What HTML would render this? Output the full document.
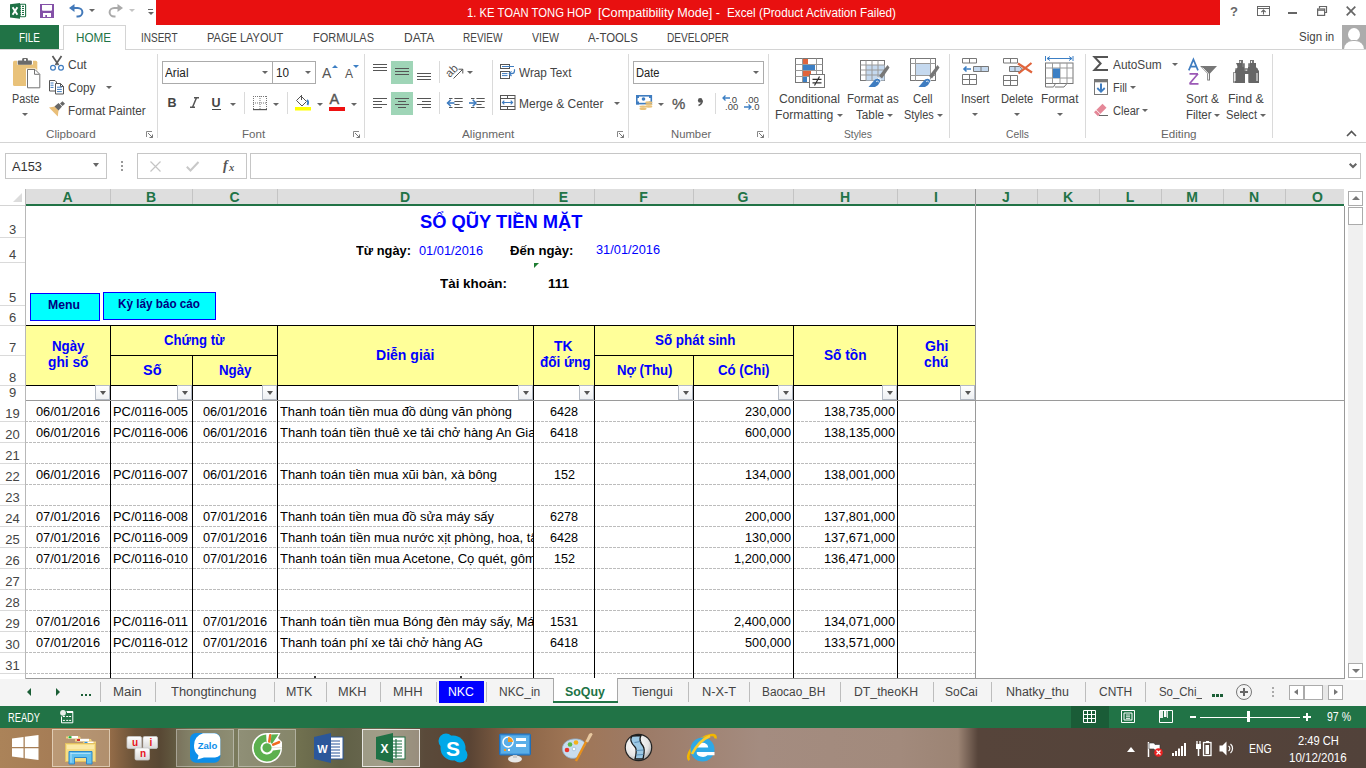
<!DOCTYPE html>
<html><head><meta charset="utf-8">
<style>
*{margin:0;padding:0;box-sizing:border-box}
html,body{width:1366px;height:768px;overflow:hidden;background:#fff;font-family:"Liberation Sans",sans-serif}
.a{position:absolute}
.t{position:absolute;white-space:nowrap;line-height:1;transform-origin:0 0}
.r{font-size:12px;color:#444}
.g{font-size:11.5px;color:#666}
svg{position:absolute;overflow:visible}
.sep{position:absolute;width:1px;background:#dadada}
.dd{position:absolute;width:0;height:0;border-left:3px solid transparent;border-right:3px solid transparent;border-top:3px solid #666}
.ddl{position:absolute;width:0;height:0;border-left:4px solid transparent;border-right:4px solid transparent;border-top:4px solid #555}
</style><style>
.fb{background:linear-gradient(#fff,#eef0f3);border:1px solid #b4bac4}
.fb:after{content:"";position:absolute;left:3.5px;top:5px;border-left:3px solid transparent;border-right:3px solid transparent;border-top:4px solid #555}
.dash{background:repeating-linear-gradient(90deg,#bcbcbc 0 3px,transparent 3px 4px)}
</style></head><body>
<!-- TITLE BAR -->
<div class="a" style="left:156px;top:0;width:1064px;height:25px;background:#e81010"></div>
<div class="t fit" style="left: 467.2px; top: 7px; font-size: 12px; color: rgb(255, 255, 255); width: 124.5px; transform: scaleX(0.939623);">1. KE TOAN TONG HOP</div>
<div class="t fit" style="left: 597.8px; top: 7px; font-size: 12px; color: rgb(255, 255, 255); width: 122px; transform: scaleX(1.0513);">[Compatibility Mode] -</div>
<div class="t fit" style="left: 726.6px; top: 7px; font-size: 12px; color: rgb(255, 255, 255); width: 169px; transform: scaleX(0.978292);">Excel (Product Activation Failed)</div>
<!-- excel logo -->
<svg style="left:10px;top:3px" width="16" height="16" viewBox="0 0 16 16">
<path d="M0 1.2 L10 0 L10 15.8 L0 14.5Z" fill="#1e7145"></path>
<rect x="10" y="1.3" width="5.6" height="12.4" rx="0.6" fill="#fff" stroke="#1e7145" stroke-width="1.1"></rect>
<path d="M12 3.4h2M12 5.5h2M12 7.5h2M12 9.5h2M12 11.5h2" stroke="#1e7145" stroke-width="1.1"></path>
<path d="M10 3.4h1M10 5.5h1M10 7.5h1M10 9.5h1M10 11.5h1" stroke="#1e7145" stroke-width="0.8"></path>
<path d="M2.6 4.2 L7.4 11.7 M7.4 4.2 L2.6 11.7" stroke="#fff" stroke-width="1.9"></path>
</svg>
<!-- save -->
<svg style="left:40px;top:4px" width="14" height="14" viewBox="0 0 14 14">
<rect x="0" y="0" width="14" height="14" fill="#8451a8"></rect>
<path d="M2 1h10v4.8a1 1 0 0 1-1 1h-8a1 1 0 0 1-1-1z" fill="#fff"></path>
<rect x="3" y="9" width="8" height="4" fill="#fff"></rect>
<rect x="5.3" y="11" width="1.7" height="2" fill="#8451a8"></rect>
</svg>
<!-- undo -->
<svg style="left:69px;top:4px" width="15" height="13" viewBox="0 0 15 13">
<path d="M0 4 L5.5 0 L5.5 8Z" fill="#4379b9"></path>
<path d="M4 4 H8.8 A4.6 4.3 0 0 1 8.8 12.6 H7.5" fill="none" stroke="#4379b9" stroke-width="2"></path>
</svg>
<div class="dd" style="left:89px;top:9px;border-left-width:3.5px;border-right-width:3.5px;border-top:3.5px solid #666"></div>
<svg style="left:108px;top:4px" width="15" height="13" viewBox="0 0 15 13">
<path d="M15 4 L9.5 0 L9.5 8Z" fill="#aaa"></path>
<path d="M11 4 H6.2 A4.6 4.3 0 0 0 6.2 12.6 H7.5" fill="none" stroke="#aaa" stroke-width="2"></path>
</svg>
<div class="dd" style="left:129px;top:9px;border-left-width:3.5px;border-right-width:3.5px;border-top:3.5px solid #c4c4c4"></div>
<div class="a" style="left:148px;top:9px;width:5px;height:1.2px;background:#666"></div>
<div class="dd" style="left:147.5px;top:11.5px;border-left-width:3px;border-right-width:3px;border-top:3px solid #666"></div>
<!-- window controls -->
<div class="t" style="left:1230px;top:5px;font-size:13px;font-weight:bold;color:#666">?</div>
<svg style="left:1257px;top:6px" width="13" height="10" viewBox="0 0 13 10">
<rect x="0.5" y="0.5" width="12" height="9" fill="none" stroke="#666" stroke-width="1"></rect>
<path d="M0.5 2.5h12" stroke="#666"></path>
<path d="M6.5 8.5v-4.5 M4.3 6.2 L6.5 4 L8.7 6.2" fill="none" stroke="#666" stroke-width="1.1"></path>
</svg>
<div class="a" style="left:1288px;top:12px;width:9px;height:2px;background:#666"></div>
<svg style="left:1317px;top:6px" width="10" height="10" viewBox="0 0 10 10">
<path d="M2.5 2.5V0.5h7v6h-2" fill="none" stroke="#666" stroke-width="1.2"></path>
<rect x="0.6" y="3" width="7" height="6.4" fill="none" stroke="#666" stroke-width="1.2"></rect>
<path d="M0.6 4.2h7" stroke="#666" stroke-width="1.2"></path>
</svg>
<svg style="left:1346px;top:6px" width="10" height="10" viewBox="0 0 10 10">
<path d="M0.7 0.7L9.3 9.3M9.3 0.7L0.7 9.3" stroke="#666" stroke-width="1.7"></path>
</svg>

<!-- TAB ROW -->
<div class="a" style="left:0;top:25px;width:59px;height:25px;background:#217346"></div>
<div class="t fit" style="left: 19px; top: 31.5px; font-size: 12.5px; color: rgb(255, 255, 255); width: 21px; transform: scaleX(0.795266);">FILE</div>
<div class="a" style="left:63px;top:25px;width:63px;height:25px;background:#fff;border:1px solid #d4d4d4;border-bottom:none;z-index:2"></div>
<div class="t fit" style="left: 76px; top: 31.5px; font-size: 12.5px; color: rgb(33, 115, 70); width: 35px; z-index: 3; transform: scaleX(0.933333);">HOME</div>
<div class="t fit r" style="left: 140.5px; top: 31.5px; font-size: 12.5px; width: 36.5px; transform: scaleX(0.8);">INSERT</div>
<div class="t fit r" style="left: 207px; top: 31.5px; font-size: 12.5px; width: 76.2px; transform: scaleX(0.8822);">PAGE LAYOUT</div>
<div class="t fit r" style="left: 313px; top: 31.5px; font-size: 12.5px; width: 61px; transform: scaleX(0.87829);">FORMULAS</div>
<div class="t fit r" style="left: 403.5px; top: 31.5px; font-size: 12.5px; width: 30.2px; transform: scaleX(0.959206);">DATA</div>
<div class="t fit r" style="left: 463px; top: 31.5px; font-size: 12.5px; width: 39.5px; transform: scaleX(0.801014);">REVIEW</div>
<div class="t fit r" style="left: 531.8px; top: 31.5px; font-size: 12.5px; width: 27px; transform: scaleX(0.844988);">VIEW</div>
<div class="t fit r" style="left: 588px; top: 31.5px; font-size: 12.5px; width: 49.8px; transform: scaleX(0.911149);">A-TOOLS</div>
<div class="t fit r" style="left: 667px; top: 31.5px; font-size: 12.5px; width: 61.8px; transform: scaleX(0.808669);">DEVELOPER</div>
<div class="t fit r" style="left: 1299px; top: 31px; font-size: 12.5px; width: 35.2px; transform: scaleX(0.920638);">Sign in</div>
<div class="a" style="left:1342px;top:25px;width:24px;height:24px;background:#acacac;overflow:hidden">
<div class="a" style="left:6px;top:3px;width:12px;height:13px;border-radius:50%;background:#fff"></div>
<div class="a" style="left:2px;top:15px;width:20px;height:14px;border-radius:9px 9px 0 0;background:#fff;border-top:1px solid #acacac"></div>
</div>
<!-- ribbon borders -->
<div class="a" style="left:0;top:49px;width:1366px;height:1px;background:#d4d4d4;z-index:1"></div>
<div class="a" style="left:0;top:142px;width:1366px;height:1px;background:#d4d4d4"></div>

<!-- ===== RIBBON CONTENT ===== -->
<!-- separators -->
<div class="sep" style="left:157px;top:54px;height:84px"></div>
<div class="sep" style="left:364px;top:54px;height:84px"></div>
<div class="sep" style="left:628px;top:54px;height:84px"></div>
<div class="sep" style="left:768px;top:54px;height:84px"></div>
<div class="sep" style="left:949px;top:54px;height:84px"></div>
<div class="sep" style="left:1085px;top:54px;height:84px"></div>
<div class="sep" style="left:1272px;top:54px;height:84px"></div>
<!-- group labels -->
<div class="t fit g" style="left: 45.8px; top: 129px; width: 49.7px; transform: scaleX(1.00946);">Clipboard</div>
<div class="t fit g" style="left: 241.6px; top: 129px; width: 23.1px; transform: scaleX(1.00367);">Font</div>
<div class="t fit g" style="left: 462.2px; top: 129px; width: 52.4px; transform: scaleX(1.02463);">Alignment</div>
<div class="t fit g" style="left: 670.8px; top: 129px; width: 40.2px; transform: scaleX(0.982735);">Number</div>
<div class="t fit g" style="left: 844.4px; top: 129px; width: 27.9px; transform: scaleX(0.890574);">Styles</div>
<div class="t fit g" style="left: 1005.6px; top: 129px; width: 22.9px; transform: scaleX(0.895844);">Cells</div>
<div class="t fit g" style="left: 1160.6px; top: 129px; width: 35.6px; transform: scaleX(1.01217);">Editing</div>
<!-- dialog launchers -->
<svg style="left:146px;top:131px" width="7" height="7" viewBox="0 0 7 7"><path d="M0.5 6V0.5H6" fill="none" stroke="#888"></path><path d="M2 2L6.5 6.5M6.5 3.5V6.5H3.5" fill="none" stroke="#777"></path></svg>
<svg style="left:353px;top:131px" width="7" height="7" viewBox="0 0 7 7"><path d="M0.5 6V0.5H6" fill="none" stroke="#888"></path><path d="M2 2L6.5 6.5M6.5 3.5V6.5H3.5" fill="none" stroke="#777"></path></svg>
<svg style="left:617px;top:131px" width="7" height="7" viewBox="0 0 7 7"><path d="M0.5 6V0.5H6" fill="none" stroke="#888"></path><path d="M2 2L6.5 6.5M6.5 3.5V6.5H3.5" fill="none" stroke="#777"></path></svg>
<svg style="left:757px;top:131px" width="7" height="7" viewBox="0 0 7 7"><path d="M0.5 6V0.5H6" fill="none" stroke="#888"></path><path d="M2 2L6.5 6.5M6.5 3.5V6.5H3.5" fill="none" stroke="#777"></path></svg>
<!-- collapse caret -->
<svg style="left:1346px;top:130px" width="11" height="7" viewBox="0 0 11 7"><path d="M1 6L5.5 1.5L10 6" fill="none" stroke="#555" stroke-width="1.6"></path></svg>

<!-- Clipboard -->
<svg style="left:12px;top:57px" width="30" height="32" viewBox="0 0 30 32">
<rect x="1" y="3.8" width="24.3" height="25.2" rx="1.5" fill="#e9c27a"></rect>
<rect x="5" y="3" width="16" height="4.5" fill="#fff"></rect>
<rect x="5.7" y="3.4" width="14.2" height="4.4" rx="1" fill="#6b6b6b"></rect>
<rect x="10.2" y="1" width="5.7" height="3.4" rx="1.2" fill="#6b6b6b"></rect>
<rect x="12.2" y="2" width="1.8" height="1.8" fill="#fff"></rect>
<path d="M14 11.5h9.5l5 5v15h-14.5z" fill="#fff"></path>
<path d="M15.5 12.5h7.5l4.8 4.8v13.5h-12.3z" fill="#fff" stroke="#737373" stroke-width="1"></path>
<path d="M22.5 12.5v4.8h5" fill="none" stroke="#737373" stroke-width="1"></path>
</svg>
<div class="t fit r" style="left: 11.5px; top: 93px; width: 27.5px; transform: scaleX(0.89613);">Paste</div>
<div class="dd" style="left:22px;top:113px"></div>
<svg style="left:49px;top:55px" width="16" height="16" viewBox="0 0 16 16">
<path d="M3.5 1L9.5 10M12.5 1L6.5 10" stroke="#595959" stroke-width="1.7"></path>
<circle cx="4" cy="12.8" r="2.4" fill="#fff" stroke="#3e7cc0" stroke-width="1.2"></circle>
<circle cx="12" cy="12.8" r="2.4" fill="#fff" stroke="#3e7cc0" stroke-width="1.2"></circle>
</svg>
<div class="t fit r" style="left: 68.4px; top: 58.5px; width: 18.7px; transform: scaleX(1.00067);">Cut</div>
<svg style="left:49px;top:80px" width="16" height="15" viewBox="0 0 16 15">
<path d="M0.5 0.5h5.5l1.5 1.5v9h-7z" fill="#fff" stroke="#555" stroke-width="1"></path>
<path d="M1.5 3h3M1.5 5.2h3M1.5 7.4h3" stroke="#3e7cc0" stroke-width="1"></path>
<path d="M6.5 3.5h5l3 3v7.5h-8z" fill="#fff" stroke="#555" stroke-width="1"></path>
<path d="M11.5 3.5v3h3" fill="none" stroke="#555" stroke-width="1"></path>
<path d="M8 7.2h4.8M8 9.4h4.8M8 11.6h4.8" stroke="#3e7cc0" stroke-width="1"></path>
</svg>
<div class="t fit r" style="left: 68.4px; top: 81.5px; width: 27.5px; transform: scaleX(0.981595);">Copy</div>
<div class="dd" style="left:105.5px;top:86px"></div>
<svg style="left:49px;top:102px" width="16" height="15" viewBox="0 0 16 15">
<path d="M0 5.5 L6 4.5 L9.5 8.5 L8.8 14.5Z" fill="#e9be78"></path>
<path d="M5.5 4.5 L9.5 1 L13 4.5 L9.5 8.5Z" fill="#666"></path>
<path d="M11 1.5 L13.5 -0.8 L16 1.8 L13.5 4Z" fill="#666"></path>
</svg>
<div class="t fit r" style="left: 68.4px; top: 105.3px; width: 77.6px; transform: scaleX(0.97783);">Format Painter</div>

<!-- Font -->
<div class="a" style="left:162px;top:61px;width:111px;height:23px;border:1px solid #ababab;background:#fff"></div>
<div class="a" style="left:272px;top:61px;width:44px;height:23px;border:1px solid #ababab;background:#fff"></div>
<div class="t fit" style="left: 165.2px; top: 66.6px; font-size: 12px; color: rgb(34, 34, 34); width: 23.5px; transform: scaleX(0.97853);">Arial</div>
<div class="dd" style="left:262px;top:71px"></div>
<div class="t fit" style="left: 276.2px; top: 66.6px; font-size: 12px; color: rgb(34, 34, 34); width: 13px; transform: scaleX(0.973099);">10</div>
<div class="dd" style="left:305px;top:71px"></div>
<div class="t" style="left:322px;top:66px;font-size:14px;color:#555">A</div>
<div class="a" style="left:332px;top:65px;width:0;height:0;border-left:3px solid transparent;border-right:3px solid transparent;border-bottom:3px solid #3c7fc4"></div>
<div class="t" style="left:345px;top:68px;font-size:12px;color:#555">A</div>
<div class="a" style="left:353px;top:65px;width:0;height:0;border-left:3px solid transparent;border-right:3px solid transparent;border-top:3px solid #3c7fc4"></div>
<div class="t" style="left:167.5px;top:97px;font-size:12.5px;font-weight:bold;color:#444">B</div>
<svg style="left:190px;top:97px" width="9" height="11" viewBox="0 0 9 11"><path d="M4 0.8h5M0 10.2h5M6.5 0.8L2.5 10.2" fill="none" stroke="#555" stroke-width="1.5"></path></svg>
<div class="t" style="left:211.5px;top:97px;font-size:12.5px;font-weight:bold;color:#444">U</div>
<div class="a" style="left:211.5px;top:109px;width:9.5px;height:1px;background:#444"></div>
<div class="dd" style="left:230px;top:103px"></div>
<div class="sep" style="left:244px;top:92px;height:22px"></div>
<svg style="left:252.5px;top:95.5px" width="14" height="14" viewBox="0 0 14 14"><g fill="#777"><rect x="0" y="0" width="1" height="1"></rect><rect x="0" y="0" width="1" height="1"></rect><rect x="13" y="0" width="1" height="1"></rect><rect x="0" y="6.5" width="1" height="1"></rect><rect x="6.5" y="0" width="1" height="1"></rect><rect x="2" y="0" width="1" height="1"></rect><rect x="0" y="2" width="1" height="1"></rect><rect x="13" y="2" width="1" height="1"></rect><rect x="2" y="6.5" width="1" height="1"></rect><rect x="6.5" y="2" width="1" height="1"></rect><rect x="4" y="0" width="1" height="1"></rect><rect x="0" y="4" width="1" height="1"></rect><rect x="13" y="4" width="1" height="1"></rect><rect x="4" y="6.5" width="1" height="1"></rect><rect x="6.5" y="4" width="1" height="1"></rect><rect x="6" y="0" width="1" height="1"></rect><rect x="0" y="6" width="1" height="1"></rect><rect x="13" y="6" width="1" height="1"></rect><rect x="6" y="6.5" width="1" height="1"></rect><rect x="6.5" y="6" width="1" height="1"></rect><rect x="8" y="0" width="1" height="1"></rect><rect x="0" y="8" width="1" height="1"></rect><rect x="13" y="8" width="1" height="1"></rect><rect x="8" y="6.5" width="1" height="1"></rect><rect x="6.5" y="8" width="1" height="1"></rect><rect x="10" y="0" width="1" height="1"></rect><rect x="0" y="10" width="1" height="1"></rect><rect x="13" y="10" width="1" height="1"></rect><rect x="10" y="6.5" width="1" height="1"></rect><rect x="6.5" y="10" width="1" height="1"></rect><rect x="12" y="0" width="1" height="1"></rect><rect x="0" y="12" width="1" height="1"></rect><rect x="13" y="12" width="1" height="1"></rect><rect x="12" y="6.5" width="1" height="1"></rect><rect x="6.5" y="12" width="1" height="1"></rect></g><rect x="0" y="13" width="14" height="1.2" fill="#555"></rect></svg>
<div class="dd" style="left:273px;top:103px"></div>
<div class="sep" style="left:287px;top:92px;height:22px"></div>
<svg style="left:295px;top:95px" width="16" height="16" viewBox="0 0 16 16">
<path d="M6 1 L11.5 6.5 L7 11 L1.5 5.5Z" fill="#fff" stroke="#555" stroke-width="1"></path>
<path d="M6.5 0V5" stroke="#555"></path>
<path d="M12 5 Q14 7 12.5 10" fill="none" stroke="#3c7fc4" stroke-width="1.8"></path>
<rect x="0" y="12" width="16" height="3.5" fill="#ffff00"></rect>
</svg>
<div class="dd" style="left:317px;top:103px"></div>
<div class="t" style="left:329.5px;top:92.3px;font-size:14.5px;color:#555;-webkit-text-stroke:0.4px #555">A</div>
<div class="a" style="left:329px;top:107px;width:16px;height:3.5px;background:#ee1111"></div>
<div class="dd" style="left:350.5px;top:103px"></div>

<!-- Alignment -->
<div class="a" style="left:391px;top:61px;width:22px;height:23px;background:#9fd5b7"></div>
<div class="a" style="left:391px;top:92px;width:22px;height:23px;background:#9fd5b7"></div>
<svg style="left:373px;top:63px" width="60" height="48" viewBox="0 0 60 48">
<path d="M0 1.5h14M0 4.5h14M0 7.5h14" stroke="#555" stroke-width="1"></path>
<path d="M22 5.5h14M22 8.5h14M22 11.5h14" stroke="#555" stroke-width="1"></path>
<path d="M44 10.5h14M44 13.5h14M44 16.5h14" stroke="#555" stroke-width="1"></path>
<path d="M0 35.5h14M0 38.5h9M0 41.5h14M0 44.5h9" stroke="#555" stroke-width="1"></path>
<path d="M22 35.5h14M25 38.5h8M22 41.5h14M25 44.5h8" stroke="#555" stroke-width="1"></path>
<path d="M44 35.5h14M49 38.5h9M44 41.5h14M49 44.5h9" stroke="#555" stroke-width="1"></path>
</svg>
<div class="sep" style="left:439px;top:61px;height:22px"></div>
<div class="sep" style="left:439px;top:92px;height:22px"></div>
<div class="t" style="left:447.5px;top:62.5px;font-size:11.5px;color:#555;transform:rotate(-45deg);transform-origin:8px 10px">ab</div>
<svg style="left:453px;top:68px" width="11" height="11" viewBox="0 0 11 11"><path d="M0.5 10.5L9.8 1.2M5.5 1.2H9.8V5.5" fill="none" stroke="#555" stroke-width="1"></path></svg>
<div class="dd" style="left:467px;top:71px"></div>
<svg style="left:447px;top:97px" width="40" height="12" viewBox="0 0 40 12">
<path d="M2 1.5h3.5M7.4 1.5h8.3M7.4 4.5h8.3M7.4 7.5h5.2M2 10.5h3.5M7.4 10.5h8.3" stroke="#555" stroke-width="1"></path>
<path d="M0.5 6h7" stroke="#3e7cc0" stroke-width="1.6"></path><path d="M3.8 2.8L0.6 6L3.8 9.2" fill="none" stroke="#3e7cc0" stroke-width="1.6"></path>
<path d="M24 1.5h3.5M29.4 1.5h8.3M29.4 4.5h8.3M29.4 7.5h5.2M24 10.5h3.5M29.4 10.5h8.3" stroke="#555" stroke-width="1"></path>
<path d="M22 6h7" stroke="#3e7cc0" stroke-width="1.6"></path><path d="M25.7 2.8L28.9 6L25.7 9.2" fill="none" stroke="#3e7cc0" stroke-width="1.6"></path>
</svg>
<div class="sep" style="left:492px;top:60px;height:55px"></div>
<svg style="left:500px;top:64px" width="17" height="15" viewBox="0 0 17 15">
<rect x="0.5" y="0.5" width="9" height="4" fill="#fff" stroke="#555"></rect>
<path d="M2 2.5h12" stroke="#3e7cc0" stroke-width="1"></path>
<rect x="0.5" y="7.5" width="9" height="7" fill="#fff" stroke="#555"></rect>
<path d="M2 9.6h5.5M2 11.6h5.5" stroke="#3e7cc0" stroke-width="1"></path>
<path d="M14.5 5.2v1.5a3 3 0 0 1-3 3h-2" fill="none" stroke="#3e7cc0" stroke-width="1.2"></path>
<path d="M11.5 7.3L9.3 9.7L11.5 12" fill="none" stroke="#3e7cc0" stroke-width="1.2"></path>
</svg>
<div class="t fit r" style="left: 519px; top: 66.5px; width: 52.5px; transform: scaleX(0.979878);">Wrap Text</div>
<svg style="left:500px;top:95px" width="16" height="15" viewBox="0 0 16 15">
<rect x="0.5" y="0.5" width="14.5" height="14" fill="#fff" stroke="#555"></rect>
<path d="M0.5 3.5h14.5M0.5 11.5h14.5M7.5 0.5v3M7.5 11.5v3" stroke="#555"></path>
<path d="M2.5 7.5h10" stroke="#3e7cc0" stroke-width="1"></path>
<path d="M4.3 5.7L2.5 7.5L4.3 9.3M10.7 5.7L12.5 7.5L10.7 9.3" fill="none" stroke="#3e7cc0" stroke-width="1.2"></path>
</svg>
<div class="t fit r" style="left: 519px; top: 97.5px; width: 84.5px; transform: scaleX(0.997602);">Merge &amp; Center</div>
<div class="dd" style="left:613.5px;top:102px"></div>

<!-- Number -->
<div class="a" style="left:633px;top:61px;width:131px;height:23px;border:1px solid #ababab;background:#fff"></div>
<div class="t fit" style="left: 636.4px; top: 66.5px; font-size: 12px; color: rgb(34, 34, 34); width: 23.5px; transform: scaleX(0.926679);">Date</div>
<div class="dd" style="left:753px;top:71px"></div>
<svg style="left:636px;top:95px" width="17" height="16" viewBox="0 0 17 16">
<rect x="0.8" y="0.8" width="14.5" height="7.8" fill="#fff" stroke="#3e7cc0" stroke-width="1.6"></rect>
<path d="M0 0h3v3h-3zM13 0h3v3h-3zM0 6.5h3v3h-3zM13 6.5h3v3h-3z" fill="#3e7cc0"></path>
<circle cx="7.5" cy="4" r="1.8" fill="#3e7cc0"></circle>
<ellipse cx="12.8" cy="7.4" rx="3.6" ry="1.2" fill="#e9c27a"></ellipse><ellipse cx="12.8" cy="9.5" rx="3.6" ry="1.2" fill="#e9c27a"></ellipse><ellipse cx="12.8" cy="11.6" rx="3.6" ry="1.2" fill="#e9c27a"></ellipse>
<ellipse cx="7" cy="11.6" rx="3.6" ry="1.2" fill="#e9c27a"></ellipse><ellipse cx="7" cy="13.8" rx="3.6" ry="1.2" fill="#e9c27a"></ellipse>
</svg>
<div class="dd" style="left:657.5px;top:102.5px"></div>
<div class="t" style="left:672px;top:96px;font-size:15px;color:#555;-webkit-text-stroke:0.3px #555">%</div>
<svg style="left:697px;top:98px" width="6" height="8" viewBox="0 0 6 8"><circle cx="3.2" cy="2.4" r="2.3" fill="#555"></circle><path d="M5.3 2.6C5.3 5 4 6.6 1.5 7.5" fill="none" stroke="#555" stroke-width="1.5"></path></svg>
<div class="sep" style="left:715px;top:93px;height:21px"></div>
<div class="t" style="left:729px;top:94.5px;font-size:9.5px;color:#444">.0</div>
<div class="t" style="left:725px;top:101.5px;font-size:9.5px;color:#444">.00</div>
<svg style="left:722px;top:95px" width="8" height="6" viewBox="0 0 8 6"><path d="M8 3H1M3.5 0.5L1 3L3.5 5.5" fill="none" stroke="#3c7fc4" stroke-width="1.3"></path></svg>
<div class="t" style="left:745.5px;top:94.5px;font-size:9.5px;color:#444">.00</div>
<div class="t" style="left:751.5px;top:101.5px;font-size:9.5px;color:#444">.0</div>
<svg style="left:744px;top:104px" width="8" height="6" viewBox="0 0 8 6"><path d="M0 3H7M4.5 0.5L7 3L4.5 5.5" fill="none" stroke="#3c7fc4" stroke-width="1.3"></path></svg>

<!-- Styles -->
<svg style="left:795px;top:58px" width="30" height="30" viewBox="0 0 30 30">
<rect x="0.5" y="0.5" width="27" height="24" fill="#fff" stroke="#777"></rect>
<path d="M0.5 6.5h27M0.5 12.5h27M0.5 18.5h27M7.5 0.5v24M21.5 0.5v24" stroke="#999"></path>
<rect x="8" y="1" width="5" height="5" fill="#e0643c"></rect>
<rect x="8" y="7" width="12" height="5" fill="#3c7fc4"></rect>
<rect x="8" y="13" width="8" height="5" fill="#e0643c"></rect>
<rect x="8" y="19" width="4" height="5" fill="#3c7fc4"></rect>
<rect x="14.5" y="16.5" width="15" height="13" fill="#fff" stroke="#777"></rect>
<path d="M17.5 21.3h9M17.5 24.8h9M24.5 18.5L19.5 27.5" stroke="#333" stroke-width="1.2"></path>
</svg>
<div class="t fit r" style="left: 778.5px; top: 93.1px; width: 60.9px; transform: scaleX(1.01421);">Conditional</div>
<div class="t fit r" style="left: 775.3px; top: 108.8px; width: 58.2px; transform: scaleX(1.01466);">Formatting</div>
<div class="dd" style="left:837px;top:113.5px"></div>
<svg style="left:860px;top:60px" width="30" height="28" viewBox="0 0 30 28">
<rect x="0.5" y="0.5" width="24" height="20" fill="#fff" stroke="#777"></rect>
<rect x="6" y="5" width="18.5" height="15.5" fill="#c5d9ef"></rect>
<path d="M0.5 5h24M0.5 10h24M0.5 15h24M6 0.5v20M12 0.5v20M18 0.5v20" stroke="#999"></path>
<path d="M19 16 L27.5 5 L29.5 7.5 L22 18.5Z" fill="#777"></path><path d="M17.5 17.5L20.8 20.5" stroke="#fff" stroke-width="1.2"></path>
<path d="M8.5 27 L15 19.5 Q19 17.5 20.5 21 Q19 25 15 27Z" fill="#3e7cc0"></path><path d="M16 21.5Q18 20.5 18.8 22" stroke="#fff" stroke-width="0.8" fill="none"></path>
</svg>
<div class="t fit r" style="left: 847.3px; top: 93.1px; width: 51.7px; transform: scaleX(0.95713);">Format as</div>
<div class="t fit r" style="left: 856px; top: 108.8px; width: 28px; transform: scaleX(0.976035);">Table</div>
<div class="dd" style="left:887px;top:113.5px"></div>
<svg style="left:910px;top:58px" width="30" height="30" viewBox="0 0 30 30">
<rect x="0.5" y="0.5" width="25" height="22" fill="#fff" stroke="#777"></rect>
<path d="M0.5 5.5h25M0.5 17.5h25M5.5 0.5v22M20.5 0.5v22" stroke="#999"></path>
<rect x="6" y="6" width="14" height="11" fill="#c5d9ef"></rect>
<path d="M19 18 L27.5 7 L29.5 9.5 L22 20.5Z" fill="#777"></path><path d="M17.5 19.5L20.8 22.5" stroke="#fff" stroke-width="1.2"></path>
<path d="M8.5 29 L15 21.5 Q19 19.5 20.5 23 Q19 27 15 29Z" fill="#3e7cc0"></path><path d="M16 23.5Q18 22.5 18.8 24" stroke="#fff" stroke-width="0.8" fill="none"></path>
</svg>
<div class="t fit r" style="left: 913.2px; top: 93.1px; width: 19.5px; transform: scaleX(0.943311);">Cell</div>
<div class="t fit r" style="left: 903.7px; top: 108.8px; width: 29.7px; transform: scaleX(0.908604);">Styles</div>
<div class="dd" style="left:936.5px;top:113.5px"></div>

<!-- Cells -->
<svg style="left:962px;top:58px" width="27" height="27" viewBox="0 0 27 27">
<path d="M0.5 0.5h14v4.5h-14zM7.5 0.5v4.5" fill="#fff" stroke="#777"></path>
<path d="M11.5 8.5h15v5h-15zM19 8.5v5" fill="#c5d9ef" stroke="#777"></path>
<path d="M9 11H2M4.5 8.5L2 11L4.5 13.5" fill="none" stroke="#3c7fc4" stroke-width="1.6"></path>
<path d="M0.5 16.5h14v10h-14zM7.5 16.5v10M0.5 21.5h14" fill="#fff" stroke="#777"></path>
</svg>
<div class="t fit r" style="left: 960.5px; top: 92.8px; width: 28.5px; transform: scaleX(0.949505);">Insert</div>
<div class="dd" style="left:971.5px;top:113px"></div>
<svg style="left:1003px;top:58px" width="30" height="28" viewBox="0 0 30 28">
<path d="M0.5 0.5h14v4.5h-14zM7.5 0.5v4.5" fill="#fff" stroke="#777"></path>
<path d="M6.5 8.5h10l3 2.5l-3 2.5h-10zM12 8.5v5" fill="#c5d9ef" stroke="#777"></path>
<path d="M0.5 17.5h14v10h-14zM7.5 17.5v10M0.5 22.5h14" fill="#fff" stroke="#777"></path>
<path d="M15 5.5L29 14.5M28.5 5L15.5 15.5" stroke="#e0643c" stroke-width="2.2"></path>
</svg>
<div class="t fit r" style="left: 1000.7px; top: 92.8px; width: 32.3px; transform: scaleX(0.931171);">Delete</div>
<div class="dd" style="left:1013.5px;top:113px"></div>
<svg style="left:1045px;top:56px" width="29" height="32" viewBox="0 0 29 32">
<path d="M0.5 0v5M28 0v5M2 2.5h25M5 0.5L2 2.5L5 4.5M24 0.5L27 2.5L24 4.5" fill="none" stroke="#3c7fc4" stroke-width="1"></path>
<rect x="0.5" y="7" width="27.5" height="20.5" fill="#fff" stroke="#777"></rect>
<path d="M0.5 12h27.5M0.5 22h27.5M7.5 7v20.5M15 7v20.5M22 7v20.5" stroke="#999"></path>
<rect x="8" y="12.5" width="7" height="9.5" fill="#3c7fc4"></rect>
<path d="M0.5 27.5v3.5h8l2-3.5M10 31h9l3-3.5" fill="none" stroke="#777"></path>
</svg>
<div class="t fit r" style="left: 1040.5px; top: 92.8px; width: 37.5px; transform: scaleX(0.986436);">Format</div>
<div class="dd" style="left:1056.5px;top:113px"></div>

<!-- Editing -->
<svg style="left:1093px;top:56px" width="15" height="15" viewBox="0 0 15 15">
<path d="M15 1H1.5L7.6 7.5L1.5 14H15" fill="none" stroke="#555" stroke-width="2"></path>
</svg>
<div class="t fit r" style="left: 1112.5px; top: 58.6px; width: 48.7px; transform: scaleX(0.986641);">AutoSum</div>
<div class="dd" style="left:1171.5px;top:63px"></div>
<svg style="left:1094px;top:79px" width="14" height="16" viewBox="0 0 14 16">
<rect x="0.5" y="0.5" width="13" height="15" fill="#fff" stroke="#777"></rect>
<rect x="0.5" y="0.5" width="13" height="2.8" fill="#777"></rect>
<path d="M7 4.5v8" stroke="#3e7cc0" stroke-width="2"></path>
<path d="M3.3 9L7 12.8L10.7 9" fill="none" stroke="#3e7cc0" stroke-width="1.8"></path>
</svg>
<div class="t fit r" style="left: 1112.5px; top: 82.3px; width: 14px; transform: scaleX(0.913354);">Fill</div>
<div class="dd" style="left:1129.5px;top:86px"></div>
<svg style="left:1094px;top:103px" width="14" height="13" viewBox="0 0 14 13">
<path d="M0 9.2L8.5 0.8L12.5 4.8L4 13.2Z" fill="#e58898"></path>
<path d="M2.2 7L6.2 11" stroke="#fff" stroke-width="0.9"></path>
<path d="M5 12.5H14" stroke="#666" stroke-width="1"></path>
</svg>
<div class="t fit r" style="left: 1112.5px; top: 105.3px; width: 26.5px; transform: scaleX(0.923747);">Clear</div>
<div class="dd" style="left:1141.5px;top:109px"></div>
<svg style="left:1188px;top:59px" width="30" height="26" viewBox="0 0 30 26">
<path d="M0.8 11.3L5.4 0.5L10 11.3M2.6 7.6H8.2" fill="none" stroke="#3e7cc0" stroke-width="1.7"></path>
<path d="M1.5 14.8H10M10 14.8L1.5 24.8M1.5 24.8H10.5" fill="none" stroke="#9b59b6" stroke-width="1.7"></path>
<path d="M12.1 7.1H29L22 14.5V21.6H19.2V14.5Z" fill="#777"></path>
<path d="M14.5 8.6L20.5 14.8V20.6" fill="none" stroke="#fff" stroke-width="0.9"></path>
</svg>
<svg style="left:1233px;top:60px" width="26" height="23" viewBox="0 0 26 23">
<path d="M0 12.2H2.3V8.3H4.3V3.2H6V0H10V3.2H11.8V8.3H15.2V3.2H17V0H21V3.2H22.7V8.3H24.7V12.2H26V22.7H15.2V12.2H11.8V22.7H0Z" fill="#777"></path>
<path d="M1.3 13v8.5M3.6 9.5v3M5.3 4.5v3.5M7.3 1v2M24.5 13v8.5M22.3 9.5v3M20.5 4.5v3.5M18.5 1v2M12.5 10.2h1.6" fill="none" stroke="#fff" stroke-width="0.9"></path>
</svg>
<div class="t fit r" style="left: 1186px; top: 92.6px; width: 33px; transform: scaleX(0.989227);">Sort &amp;</div>
<div class="t fit r" style="left: 1186.4px; top: 108.5px; width: 25.6px; transform: scaleX(0.959813);">Filter</div>
<div class="dd" style="left:1214px;top:113.5px"></div>
<svg style="left:1233px;top:59px" width="26" height="24" viewBox="0 0 26 24">
<path d="M3 4h6v4h2v4h4v-4h2v-4h6v4l3 4v12h-10v-9h-4v9h-10v-12l3-4z" fill="#666"></path>
<path d="M2 14v8M24 14v8" stroke="#fff" stroke-width="1"></path>
</svg>
<div class="t fit r" style="left: 1228px; top: 92.6px; width: 35.8px; transform: scaleX(1.03207);">Find &amp;</div>
<div class="t fit r" style="left: 1226px; top: 108.5px; width: 31px; transform: scaleX(0.929274);">Select</div>
<div class="dd" style="left:1259.5px;top:113.5px"></div>

<!-- ===== GRID ===== -->
<div class="a" style="left:25px;top:189px;width:1319px;height:15px;background:#dedede"></div>
<div class="a" style="left:110px;top:189px;width:1px;height:15px;background:#c4c4c4"></div>
<div class="t" style="left:25px;width:85px;text-align:center;top:189.6px;font-size:14px;font-weight:bold;color:#217346">A</div>
<div class="a" style="left:192px;top:189px;width:1px;height:15px;background:#c4c4c4"></div>
<div class="t" style="left:110px;width:82px;text-align:center;top:189.6px;font-size:14px;font-weight:bold;color:#217346">B</div>
<div class="a" style="left:277px;top:189px;width:1px;height:15px;background:#c4c4c4"></div>
<div class="t" style="left:192px;width:85px;text-align:center;top:189.6px;font-size:14px;font-weight:bold;color:#217346">C</div>
<div class="a" style="left:533px;top:189px;width:1px;height:15px;background:#c4c4c4"></div>
<div class="t" style="left:277px;width:256px;text-align:center;top:189.6px;font-size:14px;font-weight:bold;color:#217346">D</div>
<div class="a" style="left:594px;top:189px;width:1px;height:15px;background:#c4c4c4"></div>
<div class="t" style="left:533px;width:61px;text-align:center;top:189.6px;font-size:14px;font-weight:bold;color:#217346">E</div>
<div class="a" style="left:693px;top:189px;width:1px;height:15px;background:#c4c4c4"></div>
<div class="t" style="left:594px;width:99px;text-align:center;top:189.6px;font-size:14px;font-weight:bold;color:#217346">F</div>
<div class="a" style="left:793px;top:189px;width:1px;height:15px;background:#c4c4c4"></div>
<div class="t" style="left:693px;width:100px;text-align:center;top:189.6px;font-size:14px;font-weight:bold;color:#217346">G</div>
<div class="a" style="left:897px;top:189px;width:1px;height:15px;background:#c4c4c4"></div>
<div class="t" style="left:793px;width:104px;text-align:center;top:189.6px;font-size:14px;font-weight:bold;color:#217346">H</div>
<div class="a" style="left:975px;top:189px;width:1px;height:17px;background:#9a9a9a;z-index:1"></div>
<div class="t" style="left:897px;width:78px;text-align:center;top:189.6px;font-size:14px;font-weight:bold;color:#217346">I</div>
<div class="a" style="left:1037px;top:189px;width:1px;height:15px;background:#c4c4c4"></div>
<div class="t" style="left:975px;width:62px;text-align:center;top:189.6px;font-size:14px;font-weight:bold;color:#217346">J</div>
<div class="a" style="left:1099px;top:189px;width:1px;height:15px;background:#c4c4c4"></div>
<div class="t" style="left:1037px;width:62px;text-align:center;top:189.6px;font-size:14px;font-weight:bold;color:#217346">K</div>
<div class="a" style="left:1161px;top:189px;width:1px;height:15px;background:#c4c4c4"></div>
<div class="t" style="left:1099px;width:62px;text-align:center;top:189.6px;font-size:14px;font-weight:bold;color:#217346">L</div>
<div class="a" style="left:1223px;top:189px;width:1px;height:15px;background:#c4c4c4"></div>
<div class="t" style="left:1161px;width:62px;text-align:center;top:189.6px;font-size:14px;font-weight:bold;color:#217346">M</div>
<div class="a" style="left:1285px;top:189px;width:1px;height:15px;background:#c4c4c4"></div>
<div class="t" style="left:1223px;width:62px;text-align:center;top:189.6px;font-size:14px;font-weight:bold;color:#217346">N</div>
<div class="t" style="left:1285px;width:65px;text-align:center;top:189.6px;font-size:14px;font-weight:bold;color:#217346">O</div>
<div class="a" style="left:25px;top:204px;width:1319px;height:2px;background:#217346"></div>
<svg style="left:13px;top:193px" width="9" height="9" viewBox="0 0 9 9"><path d="M9 0V9H0Z" fill="#dcdcdc"></path></svg>
<div class="a" style="left:0;top:205px;width:25px;height:1px;background:#d4d4d4"></div>
<div class="a" style="left:25px;top:189px;width:1px;height:490px;background:#b8b8b8"></div>
<div class="a" style="left:0;top:237px;width:25px;height:1px;background:#dadada"></div>
<div class="t" style="left:0;width:25px;text-align:center;top:222.5px;font-size:13px;color:#444">3</div>
<div class="a" style="left:0;top:262px;width:25px;height:1px;background:#dadada"></div>
<div class="t" style="left:0;width:25px;text-align:center;top:247.5px;font-size:13px;color:#444">4</div>
<div class="a" style="left:0;top:305px;width:25px;height:1px;background:#dadada"></div>
<div class="t" style="left:0;width:25px;text-align:center;top:290.5px;font-size:13px;color:#444">5</div>
<div class="a" style="left:0;top:325px;width:25px;height:1px;background:#dadada"></div>
<div class="t" style="left:0;width:25px;text-align:center;top:310.5px;font-size:13px;color:#444">6</div>
<div class="a" style="left:0;top:355px;width:25px;height:1px;background:#dadada"></div>
<div class="t" style="left:0;width:25px;text-align:center;top:340.5px;font-size:13px;color:#444">7</div>
<div class="a" style="left:0;top:385px;width:25px;height:1px;background:#dadada"></div>
<div class="t" style="left:0;width:25px;text-align:center;top:370.5px;font-size:13px;color:#444">8</div>
<div class="t" style="left:0;width:25px;text-align:center;top:385.5px;font-size:13px;color:#444">9</div>
<div class="a" style="left:0;top:421px;width:25px;height:1px;background:#dadada"></div>
<div class="t" style="left:0;width:25px;text-align:center;top:406.5px;font-size:13px;color:#444">19</div>
<div class="a" style="left:0;top:442px;width:25px;height:1px;background:#dadada"></div>
<div class="t" style="left:0;width:25px;text-align:center;top:427.5px;font-size:13px;color:#444">20</div>
<div class="a" style="left:0;top:463px;width:25px;height:1px;background:#dadada"></div>
<div class="t" style="left:0;width:25px;text-align:center;top:448.5px;font-size:13px;color:#444">21</div>
<div class="a" style="left:0;top:484px;width:25px;height:1px;background:#dadada"></div>
<div class="t" style="left:0;width:25px;text-align:center;top:469.5px;font-size:13px;color:#444">22</div>
<div class="a" style="left:0;top:505px;width:25px;height:1px;background:#dadada"></div>
<div class="t" style="left:0;width:25px;text-align:center;top:490.5px;font-size:13px;color:#444">23</div>
<div class="a" style="left:0;top:526px;width:25px;height:1px;background:#dadada"></div>
<div class="t" style="left:0;width:25px;text-align:center;top:511.5px;font-size:13px;color:#444">24</div>
<div class="a" style="left:0;top:547px;width:25px;height:1px;background:#dadada"></div>
<div class="t" style="left:0;width:25px;text-align:center;top:532.5px;font-size:13px;color:#444">25</div>
<div class="a" style="left:0;top:568px;width:25px;height:1px;background:#dadada"></div>
<div class="t" style="left:0;width:25px;text-align:center;top:553.5px;font-size:13px;color:#444">26</div>
<div class="a" style="left:0;top:589px;width:25px;height:1px;background:#dadada"></div>
<div class="t" style="left:0;width:25px;text-align:center;top:574.5px;font-size:13px;color:#444">27</div>
<div class="a" style="left:0;top:610px;width:25px;height:1px;background:#dadada"></div>
<div class="t" style="left:0;width:25px;text-align:center;top:595.5px;font-size:13px;color:#444">28</div>
<div class="a" style="left:0;top:631px;width:25px;height:1px;background:#dadada"></div>
<div class="t" style="left:0;width:25px;text-align:center;top:616.5px;font-size:13px;color:#444">29</div>
<div class="a" style="left:0;top:652px;width:25px;height:1px;background:#dadada"></div>
<div class="t" style="left:0;width:25px;text-align:center;top:637.5px;font-size:13px;color:#444">30</div>
<div class="a" style="left:0;top:673px;width:25px;height:1px;background:#dadada"></div>
<div class="t" style="left:0;width:25px;text-align:center;top:658.5px;font-size:13px;color:#444">31</div>
<div class="t fit " style="left: 419.8px; top: 213px; font-size: 18px; font-weight: bold; color: rgb(0, 0, 255); width: 162.5px; transform: scaleX(1.01761);">SỔ QŨY TIỀN MẶT</div>
<div class="t fit " style="left: 355.7px; top: 244px; font-size: 13px; font-weight: bold; color: rgb(0, 0, 0); width: 55px; transform: scaleX(0.988486);">Từ ngày:</div>
<div class="t fit " style="left: 419px; top: 244px; font-size: 13px; color: rgb(0, 0, 255); width: 64px; transform: scaleX(0.983433);">01/01/2016</div>
<div class="t fit " style="left: 510.2px; top: 244px; font-size: 13px; font-weight: bold; color: rgb(0, 0, 0); width: 63.5px; transform: scaleX(1.01044);">Đến ngày:</div>
<div class="t fit " style="left: 596px; top: 243px; font-size: 13px; color: rgb(0, 0, 255); width: 64px; transform: scaleX(0.983433);">31/01/2016</div>
<svg style="left:534px;top:263px" width="5" height="5" viewBox="0 0 5 5"><path d="M0 0H5L0 5Z" fill="#1e7d32"></path></svg>
<div class="t fit " style="left: 440px; top: 277px; font-size: 13px; font-weight: bold; color: rgb(0, 0, 0); width: 67px; transform: scaleX(1.03052);">Tài khoản:</div>
<div class="t fit " style="left: 547.5px; top: 277px; font-size: 13px; font-weight: bold; color: rgb(0, 0, 0); width: 21px; transform: scaleX(1.03624);">111</div>
<div class="a" style="left:30px;top:293px;width:70px;height:28px;background:#00ffff;border:1.5px solid #0000ff"></div>
<div class="t fit " style="left: 48.3px; top: 299px; font-size: 12px; font-weight: bold; color: rgb(0, 0, 128); width: 32px; transform: scaleX(1.02094);">Menu</div>
<div class="a" style="left:103px;top:292px;width:113px;height:28px;background:#00ffff;border:1.5px solid #0000ff"></div>
<div class="t fit " style="left: 117.9px; top: 298px; font-size: 12px; font-weight: bold; color: rgb(0, 0, 128); width: 82px; transform: scaleX(0.975646);">Kỳ lấy báo cáo</div>
<div class="a" style="left:26px;top:325px;width:949px;height:60px;background:#ffff99"></div>
<div class="a" style="left:26px;top:325px;width:949px;height:1px;background:#000"></div>
<div class="a" style="left:26px;top:385px;width:949px;height:1px;background:#000"></div>
<div class="a" style="left:110px;top:355px;width:167px;height:1px;background:#000"></div>
<div class="a" style="left:594px;top:355px;width:199px;height:1px;background:#000"></div>
<div class="a" style="left:110px;top:325px;width:1px;height:75px;background:#000"></div>
<div class="a" style="left:277px;top:325px;width:1px;height:75px;background:#000"></div>
<div class="a" style="left:533px;top:325px;width:1px;height:75px;background:#000"></div>
<div class="a" style="left:594px;top:325px;width:1px;height:75px;background:#000"></div>
<div class="a" style="left:793px;top:325px;width:1px;height:75px;background:#000"></div>
<div class="a" style="left:897px;top:325px;width:1px;height:75px;background:#000"></div>
<div class="a" style="left:192px;top:355px;width:1px;height:45px;background:#000"></div>
<div class="a" style="left:693px;top:355px;width:1px;height:45px;background:#000"></div>
<div class="t fit " style="left: 51.8px; top: 339px; font-size: 14px; font-weight: bold; color: rgb(0, 0, 255); width: 32.5px; transform: scaleX(0.949338);">Ngày</div>
<div class="t fit " style="left: 47.8px; top: 355px; font-size: 14px; font-weight: bold; color: rgb(0, 0, 255); width: 40.5px; transform: scaleX(0.98219);">ghi sổ</div>
<div class="t fit " style="left: 164.2px; top: 333px; font-size: 14px; font-weight: bold; color: rgb(0, 0, 255); width: 60.5px; transform: scaleX(0.936623);">Chứng từ</div>
<div class="t fit " style="left: 142.6px; top: 363px; font-size: 14px; font-weight: bold; color: rgb(0, 0, 255); width: 18.5px; transform: scaleX(1.03406);">Số</div>
<div class="t fit " style="left: 218.8px; top: 363px; font-size: 14px; font-weight: bold; color: rgb(0, 0, 255); width: 32.5px; transform: scaleX(0.949338);">Ngày</div>
<div class="t fit " style="left: 376.4px; top: 348px; font-size: 14px; font-weight: bold; color: rgb(0, 0, 255); width: 58.5px; transform: scaleX(1.00241);">Diễn giải</div>
<div class="t fit " style="left: 554.2px; top: 339px; font-size: 14px; font-weight: bold; color: rgb(0, 0, 255); width: 18.5px; transform: scaleX(0.990795);">TK</div>
<div class="t fit " style="left: 540px; top: 355px; font-size: 14px; font-weight: bold; color: rgb(0, 0, 255); width: 50.5px; transform: scaleX(0.968825);">đối ứng</div>
<div class="t fit " style="left: 654.8px; top: 333px; font-size: 14px; font-weight: bold; color: rgb(0, 0, 255); width: 80.5px; transform: scaleX(0.958333);">Số phát sinh</div>
<div class="t fit " style="left: 616.5px; top: 363px; font-size: 14px; font-weight: bold; color: rgb(0, 0, 255); width: 55.5px; transform: scaleX(0.941676);">Nợ (Thu)</div>
<div class="t fit " style="left: 718.2px; top: 363px; font-size: 14px; font-weight: bold; color: rgb(0, 0, 255); width: 51.5px; transform: scaleX(0.946039);">Có (Chi)</div>
<div class="t fit " style="left: 824.2px; top: 348px; font-size: 14px; font-weight: bold; color: rgb(0, 0, 255); width: 42.5px; transform: scaleX(0.97596);">Số tồn</div>
<div class="t fit " style="left: 925px; top: 339px; font-size: 14px; font-weight: bold; color: rgb(0, 0, 255); width: 23.5px; transform: scaleX(1.00669);">Ghi</div>
<div class="t fit " style="left: 924px; top: 355px; font-size: 14px; font-weight: bold; color: rgb(0, 0, 255); width: 24.5px; transform: scaleX(0.984306);">chú</div>
<div class="a fb" style="left:95px;top:385px;width:15px;height:15px"></div>
<div class="a fb" style="left:177px;top:385px;width:15px;height:15px"></div>
<div class="a fb" style="left:262px;top:385px;width:15px;height:15px"></div>
<div class="a fb" style="left:518px;top:385px;width:15px;height:15px"></div>
<div class="a fb" style="left:579px;top:385px;width:15px;height:15px"></div>
<div class="a fb" style="left:678px;top:385px;width:15px;height:15px"></div>
<div class="a fb" style="left:778px;top:385px;width:15px;height:15px"></div>
<div class="a fb" style="left:882px;top:385px;width:15px;height:15px"></div>
<div class="a fb" style="left:960px;top:385px;width:15px;height:15px"></div>
<div class="a" style="left:26px;top:400px;width:1318px;height:1px;background:#9a9a9a"></div>
<div class="a" style="left:975px;top:206px;width:1px;height:472px;background:#9a9a9a"></div>
<div class="a dash" style="left:25px;top:421px;width:950px;height:1px"></div>
<div class="a dash" style="left:25px;top:442px;width:950px;height:1px"></div>
<div class="a dash" style="left:25px;top:463px;width:950px;height:1px"></div>
<div class="a dash" style="left:25px;top:484px;width:950px;height:1px"></div>
<div class="a dash" style="left:25px;top:505px;width:950px;height:1px"></div>
<div class="a dash" style="left:25px;top:526px;width:950px;height:1px"></div>
<div class="a dash" style="left:25px;top:547px;width:950px;height:1px"></div>
<div class="a dash" style="left:25px;top:568px;width:950px;height:1px"></div>
<div class="a dash" style="left:25px;top:589px;width:950px;height:1px"></div>
<div class="a dash" style="left:25px;top:610px;width:950px;height:1px"></div>
<div class="a dash" style="left:25px;top:631px;width:950px;height:1px"></div>
<div class="a dash" style="left:25px;top:652px;width:950px;height:1px"></div>
<div class="a dash" style="left:25px;top:673px;width:950px;height:1px"></div>
<div class="a" style="left:110px;top:401px;width:1px;height:277px;background:#000"></div>
<div class="a" style="left:192px;top:401px;width:1px;height:277px;background:#000"></div>
<div class="a" style="left:277px;top:401px;width:1px;height:277px;background:#000"></div>
<div class="a" style="left:533px;top:401px;width:1px;height:277px;background:#000"></div>
<div class="a" style="left:594px;top:401px;width:1px;height:277px;background:#000"></div>
<div class="a" style="left:693px;top:401px;width:1px;height:277px;background:#000"></div>
<div class="a" style="left:793px;top:401px;width:1px;height:277px;background:#000"></div>
<div class="a" style="left:897px;top:401px;width:1px;height:277px;background:#000"></div>
<div class="a" style="left:1344px;top:206px;width:1px;height:473px;background:#9a9a9a"></div>
<div class="a" style="left:26px;top:678px;width:1319px;height:1px;background:#9a9a9a"></div>
<div class="t fit " style="left: 36px; top: 405px; font-size: 13px; color: rgb(0, 0, 0); width: 64px; transform: scaleX(0.983433);">06/01/2016</div>
<div class="t fit " style="left: 113px; top: 405px; font-size: 13px; color: rgb(0, 0, 0); width: 75px; transform: scaleX(0.991326);">PC/0116-005</div>
<div class="t fit " style="left: 203px; top: 405px; font-size: 13px; color: rgb(0, 0, 0); width: 64px; transform: scaleX(0.983433);">06/01/2016</div>
<div class="a" style="left:278px;top:401px;width:255px;height:20px;overflow:hidden"><div class="t fit" style="left: 2px; top: 4px; font-size: 13px; color: rgb(0, 0, 0); width: 232px; transform: scaleX(0.990659);">Thanh toán tiền mua đồ dùng văn phòng</div></div>
<div class="t fit " style="left: 550px; top: 405px; font-size: 13px; color: rgb(0, 0, 0); width: 28px; transform: scaleX(0.968125);">6428</div>
<div class="t fit " style="left: 745px; top: 405px; font-size: 13px; color: rgb(0, 0, 0); width: 46px; transform: scaleX(0.978723);">230,000</div>
<div class="t fit " style="left: 824px; top: 405px; font-size: 13px; color: rgb(0, 0, 0); width: 71px; transform: scaleX(0.982062);">138,735,000</div>
<div class="t fit " style="left: 36px; top: 426px; font-size: 13px; color: rgb(0, 0, 0); width: 64px; transform: scaleX(0.983433);">06/01/2016</div>
<div class="t fit " style="left: 113px; top: 426px; font-size: 13px; color: rgb(0, 0, 0); width: 75px; transform: scaleX(0.991326);">PC/0116-006</div>
<div class="t fit " style="left: 203px; top: 426px; font-size: 13px; color: rgb(0, 0, 0); width: 64px; transform: scaleX(0.983433);">06/01/2016</div>
<div class="a" style="left:278px;top:422px;width:255px;height:20px;overflow:hidden"><div class="t fit" style="left: 2px; top: 4px; font-size: 13px; color: rgb(0, 0, 0); width: 270px; transform: scaleX(1.00203);">Thanh toán tiền thuê xe tải chở hàng An Giang</div></div>
<div class="t fit " style="left: 550px; top: 426px; font-size: 13px; color: rgb(0, 0, 0); width: 28px; transform: scaleX(0.968125);">6418</div>
<div class="t fit " style="left: 745px; top: 426px; font-size: 13px; color: rgb(0, 0, 0); width: 46px; transform: scaleX(0.978723);">600,000</div>
<div class="t fit " style="left: 824px; top: 426px; font-size: 13px; color: rgb(0, 0, 0); width: 71px; transform: scaleX(0.982062);">138,135,000</div>
<div class="t fit " style="left: 36px; top: 468px; font-size: 13px; color: rgb(0, 0, 0); width: 64px; transform: scaleX(0.983433);">06/01/2016</div>
<div class="t fit " style="left: 113px; top: 468px; font-size: 13px; color: rgb(0, 0, 0); width: 75px; transform: scaleX(0.991326);">PC/0116-007</div>
<div class="t fit " style="left: 203px; top: 468px; font-size: 13px; color: rgb(0, 0, 0); width: 64px; transform: scaleX(0.983433);">06/01/2016</div>
<div class="a" style="left:278px;top:464px;width:255px;height:20px;overflow:hidden"><div class="t fit" style="left: 2px; top: 4px; font-size: 13px; color: rgb(0, 0, 0); width: 217px; transform: scaleX(0.994201);">Thanh toán tiền mua xũi bàn, xà bông</div></div>
<div class="t fit " style="left: 553.5px; top: 468px; font-size: 13px; color: rgb(0, 0, 0); width: 21px; transform: scaleX(0.967603);">152</div>
<div class="t fit " style="left: 745px; top: 468px; font-size: 13px; color: rgb(0, 0, 0); width: 46px; transform: scaleX(0.978723);">134,000</div>
<div class="t fit " style="left: 824px; top: 468px; font-size: 13px; color: rgb(0, 0, 0); width: 71px; transform: scaleX(0.982062);">138,001,000</div>
<div class="t fit " style="left: 36px; top: 510px; font-size: 13px; color: rgb(0, 0, 0); width: 64px; transform: scaleX(0.983433);">07/01/2016</div>
<div class="t fit " style="left: 113px; top: 510px; font-size: 13px; color: rgb(0, 0, 0); width: 75px; transform: scaleX(0.991326);">PC/0116-008</div>
<div class="t fit " style="left: 203px; top: 510px; font-size: 13px; color: rgb(0, 0, 0); width: 64px; transform: scaleX(0.983433);">07/01/2016</div>
<div class="a" style="left:278px;top:506px;width:255px;height:20px;overflow:hidden"><div class="t fit" style="left: 2px; top: 4px; font-size: 13px; color: rgb(0, 0, 0); width: 214px; transform: scaleX(0.993544);">Thanh toán tiền mua đồ sửa máy sấy</div></div>
<div class="t fit " style="left: 550px; top: 510px; font-size: 13px; color: rgb(0, 0, 0); width: 28px; transform: scaleX(0.968125);">6278</div>
<div class="t fit " style="left: 745px; top: 510px; font-size: 13px; color: rgb(0, 0, 0); width: 46px; transform: scaleX(0.978723);">200,000</div>
<div class="t fit " style="left: 824px; top: 510px; font-size: 13px; color: rgb(0, 0, 0); width: 71px; transform: scaleX(0.982062);">137,801,000</div>
<div class="t fit " style="left: 36px; top: 531px; font-size: 13px; color: rgb(0, 0, 0); width: 64px; transform: scaleX(0.983433);">07/01/2016</div>
<div class="t fit " style="left: 113px; top: 531px; font-size: 13px; color: rgb(0, 0, 0); width: 75px; transform: scaleX(0.991326);">PC/0116-009</div>
<div class="t fit " style="left: 203px; top: 531px; font-size: 13px; color: rgb(0, 0, 0); width: 64px; transform: scaleX(0.983433);">07/01/2016</div>
<div class="a" style="left:278px;top:527px;width:255px;height:20px;overflow:hidden"><div class="t fit" style="left: 2px; top: 4px; font-size: 13px; color: rgb(0, 0, 0); width: 264px; transform: scaleX(1.00124);">Thanh toán tiền mua nước xịt phòng, hoa, tẩy</div></div>
<div class="t fit " style="left: 550px; top: 531px; font-size: 13px; color: rgb(0, 0, 0); width: 28px; transform: scaleX(0.968125);">6428</div>
<div class="t fit " style="left: 745px; top: 531px; font-size: 13px; color: rgb(0, 0, 0); width: 46px; transform: scaleX(0.978723);">130,000</div>
<div class="t fit " style="left: 824px; top: 531px; font-size: 13px; color: rgb(0, 0, 0); width: 71px; transform: scaleX(0.982062);">137,671,000</div>
<div class="t fit " style="left: 36px; top: 552px; font-size: 13px; color: rgb(0, 0, 0); width: 64px; transform: scaleX(0.983433);">07/01/2016</div>
<div class="t fit " style="left: 113px; top: 552px; font-size: 13px; color: rgb(0, 0, 0); width: 75px; transform: scaleX(0.991326);">PC/0116-010</div>
<div class="t fit " style="left: 203px; top: 552px; font-size: 13px; color: rgb(0, 0, 0); width: 64px; transform: scaleX(0.983433);">07/01/2016</div>
<div class="a" style="left:278px;top:548px;width:255px;height:20px;overflow:hidden"><div class="t fit" style="left: 2px; top: 4px; font-size: 13px; color: rgb(0, 0, 0); width: 256px; transform: scaleX(1.00343);">Thanh toán tiền mua Acetone, Cọ quét, gôm</div></div>
<div class="t fit " style="left: 553.5px; top: 552px; font-size: 13px; color: rgb(0, 0, 0); width: 21px; transform: scaleX(0.967603);">152</div>
<div class="t fit " style="left: 734px; top: 552px; font-size: 13px; color: rgb(0, 0, 0); width: 57px; transform: scaleX(0.985413);">1,200,000</div>
<div class="t fit " style="left: 824px; top: 552px; font-size: 13px; color: rgb(0, 0, 0); width: 71px; transform: scaleX(0.982062);">136,471,000</div>
<div class="t fit " style="left: 36px; top: 615px; font-size: 13px; color: rgb(0, 0, 0); width: 64px; transform: scaleX(0.983433);">07/01/2016</div>
<div class="t fit " style="left: 113px; top: 615px; font-size: 13px; color: rgb(0, 0, 0); width: 75px; transform: scaleX(1.00418);">PC/0116-011</div>
<div class="t fit " style="left: 203px; top: 615px; font-size: 13px; color: rgb(0, 0, 0); width: 64px; transform: scaleX(0.983433);">07/01/2016</div>
<div class="a" style="left:278px;top:611px;width:255px;height:20px;overflow:hidden"><div class="t fit" style="left: 2px; top: 4px; font-size: 13px; color: rgb(0, 0, 0); width: 261px; transform: scaleX(0.998625);">Thanh toán tiền mua Bóng đèn máy sấy, Máy</div></div>
<div class="t fit " style="left: 550px; top: 615px; font-size: 13px; color: rgb(0, 0, 0); width: 28px; transform: scaleX(0.968125);">1531</div>
<div class="t fit " style="left: 734px; top: 615px; font-size: 13px; color: rgb(0, 0, 0); width: 57px; transform: scaleX(0.985413);">2,400,000</div>
<div class="t fit " style="left: 824px; top: 615px; font-size: 13px; color: rgb(0, 0, 0); width: 71px; transform: scaleX(0.982062);">134,071,000</div>
<div class="t fit " style="left: 36px; top: 636px; font-size: 13px; color: rgb(0, 0, 0); width: 64px; transform: scaleX(0.983433);">07/01/2016</div>
<div class="t fit " style="left: 113px; top: 636px; font-size: 13px; color: rgb(0, 0, 0); width: 75px; transform: scaleX(0.991326);">PC/0116-012</div>
<div class="t fit " style="left: 203px; top: 636px; font-size: 13px; color: rgb(0, 0, 0); width: 64px; transform: scaleX(0.983433);">07/01/2016</div>
<div class="a" style="left:278px;top:632px;width:255px;height:20px;overflow:hidden"><div class="t fit" style="left: 2px; top: 4px; font-size: 13px; color: rgb(0, 0, 0); width: 203px; transform: scaleX(1.00386);">Thanh toán phí xe tải chở hàng AG</div></div>
<div class="t fit " style="left: 550px; top: 636px; font-size: 13px; color: rgb(0, 0, 0); width: 28px; transform: scaleX(0.968125);">6418</div>
<div class="t fit " style="left: 745px; top: 636px; font-size: 13px; color: rgb(0, 0, 0); width: 46px; transform: scaleX(0.978723);">500,000</div>
<div class="t fit " style="left: 824px; top: 636px; font-size: 13px; color: rgb(0, 0, 0); width: 71px; transform: scaleX(0.982062);">133,571,000</div>
<div class="a" style="left:314px;top:676px;width:2px;height:2px;background:#333"></div>
<div class="a" style="left:460px;top:676px;width:2px;height:2px;background:#333"></div>
<!-- ===== FORMULA BAR ===== -->
<div class="a" style="left:5px;top:153px;width:102px;height:26px;border:1px solid #c6c6c6;background:#fff"></div>
<div class="t fit" style="left: 11.7px; top: 161.2px; font-size: 12.5px; color: rgb(51, 51, 51); width: 30px; transform: scaleX(1.02729);">A153</div>
<div class="a" style="left:93px;top:163px;width:0;height:0;border-left:3.8px solid transparent;border-right:3.8px solid transparent;border-top:4px solid #666"></div>
<div class="a" style="left:121px;top:161px;width:2px;height:2px;background:#999"></div>
<div class="a" style="left:121px;top:165px;width:2px;height:2px;background:#999"></div>
<div class="a" style="left:121px;top:169px;width:2px;height:2px;background:#999"></div>
<div class="a" style="left:137px;top:153px;width:110px;height:26px;border:1px solid #c6c6c6;background:#fff"></div>
<svg style="left:150px;top:161px" width="11" height="11" viewBox="0 0 11 11"><path d="M0.5 0.5L10.5 10.5M10.5 0.5L0.5 10.5" stroke="#c4c4c4" stroke-width="1.2"></path></svg>
<svg style="left:186px;top:161px" width="13" height="11" viewBox="0 0 13 11"><path d="M0.8 5.8L4.5 9.5L12.5 1" fill="none" stroke="#c8c8c8" stroke-width="2"></path></svg>
<div class="t" style="left:223px;top:159px;font-size:14px;font-style:italic;font-weight:bold;font-family:'Liberation Serif';color:#555">f</div>
<div class="t" style="left:229px;top:163px;font-size:10.5px;font-style:italic;font-weight:bold;font-family:'Liberation Serif';color:#555">x</div>
<div class="a" style="left:250px;top:153px;width:1111px;height:26px;border:1px solid #c6c6c6;background:#fff"></div>
<svg style="left:1349px;top:163px" width="8" height="5" viewBox="0 0 8 5"><path d="M0.7 0.7L4 4L7.3 0.7" fill="none" stroke="#666" stroke-width="2.1"></path></svg>

<!-- ===== V SCROLLBAR ===== -->
<div class="a" style="left:1345px;top:189px;width:21px;height:492px;background:#fff"></div>
<div class="a" style="left:1348px;top:207px;width:15px;height:457px;background:#f0f0f0"></div>
<div class="a" style="left:1348px;top:191px;width:15px;height:15px;border:1px solid #ababab;background:#fff"></div>
<div class="a" style="left:1351.5px;top:196px;width:0;height:0;border-left:4px solid transparent;border-right:4px solid transparent;border-bottom:4px solid #777"></div>
<div class="a" style="left:1348px;top:207px;width:15px;height:18px;border:1px solid #ababab;background:#fff"></div>
<div class="a" style="left:1348px;top:663px;width:15px;height:15px;border:1px solid #ababab;background:#fff"></div>
<div class="a" style="left:1351.5px;top:669px;width:0;height:0;border-left:4px solid transparent;border-right:4px solid transparent;border-top:4px solid #777"></div>

<!-- ===== SHEET TABS ===== -->
<div class="a" style="left:0;top:679px;width:1366px;height:27px;background:#f4f4f4"></div>
<div class="a" style="left:26.5px;top:688px;width:0;height:0;border-top:4px solid transparent;border-bottom:4px solid transparent;border-right:4.5px solid #1b5e36"></div>
<div class="a" style="left:56px;top:688px;width:0;height:0;border-top:4px solid transparent;border-bottom:4px solid transparent;border-left:4.5px solid #1b5e36"></div>
<div class="a" style="left:81px;top:694px;width:2px;height:2px;background:#1b5e36"></div>
<div class="a" style="left:85px;top:694px;width:2px;height:2px;background:#1b5e36"></div>
<div class="a" style="left:89px;top:694px;width:2px;height:2px;background:#1b5e36"></div>

<div class="a" style="left:100px;top:682px;width:1px;height:20px;background:#bdbdbd"></div>
<div class="a" style="left:155px;top:682px;width:1px;height:20px;background:#bdbdbd"></div>
<div class="a" style="left:274px;top:682px;width:1px;height:20px;background:#bdbdbd"></div>
<div class="a" style="left:326px;top:682px;width:1px;height:20px;background:#bdbdbd"></div>
<div class="a" style="left:380px;top:682px;width:1px;height:20px;background:#bdbdbd"></div>
<div class="a" style="left:436px;top:682px;width:1px;height:20px;background:#bdbdbd"></div>
<div class="a" style="left:486px;top:682px;width:1px;height:20px;background:#bdbdbd"></div>
<div class="a" style="left:688px;top:682px;width:1px;height:20px;background:#bdbdbd"></div>
<div class="a" style="left:749px;top:682px;width:1px;height:20px;background:#bdbdbd"></div>
<div class="a" style="left:840px;top:682px;width:1px;height:20px;background:#bdbdbd"></div>
<div class="a" style="left:933px;top:682px;width:1px;height:20px;background:#bdbdbd"></div>
<div class="a" style="left:991px;top:682px;width:1px;height:20px;background:#bdbdbd"></div>
<div class="a" style="left:1085px;top:682px;width:1px;height:20px;background:#bdbdbd"></div>
<div class="a" style="left:1145px;top:682px;width:1px;height:20px;background:#bdbdbd"></div>
<div class="t fit" style="left: 113.2px; top: 686px; font-size: 12.5px; color: rgb(68, 68, 68); width: 28.7px; transform: scaleX(1.05928);">Main</div>
<div class="t fit" style="left: 171.2px; top: 686px; font-size: 12.5px; color: rgb(68, 68, 68); width: 85.4px; transform: scaleX(1.03261);">Thongtinchung</div>
<div class="t fit" style="left: 286.4px; top: 686px; font-size: 12.5px; color: rgb(68, 68, 68); width: 26.3px; transform: scaleX(0.996566);">MTK</div>
<div class="t fit" style="left: 338.3px; top: 686px; font-size: 12.5px; color: rgb(68, 68, 68); width: 28.4px; transform: scaleX(1.02227);">MKH</div>
<div class="t fit" style="left: 393.1px; top: 686px; font-size: 12.5px; color: rgb(68, 68, 68); width: 29.5px; transform: scaleX(1.03622);">MHH</div>
<div class="t fit" style="left: 499px; top: 686px; font-size: 12.5px; color: rgb(68, 68, 68); width: 41.2px; transform: scaleX(0.956402);">NKC_in</div>
<div class="t fit" style="left: 631.6px; top: 686px; font-size: 12.5px; color: rgb(68, 68, 68); width: 40.9px; transform: scaleX(1.00871);">Tiengui</div>
<div class="t fit" style="left: 701.5px; top: 686px; font-size: 12.5px; color: rgb(68, 68, 68); width: 34.2px; transform: scaleX(1.02616);">N-X-T</div>
<div class="t fit" style="left: 762.4px; top: 686px; font-size: 12.5px; color: rgb(68, 68, 68); width: 63.3px; transform: scaleX(0.948759);">Baocao_BH</div>
<div class="t fit" style="left: 853.9px; top: 686px; font-size: 12.5px; color: rgb(68, 68, 68); width: 64px; transform: scaleX(0.979904);">DT_theoKH</div>
<div class="t fit" style="left: 945px; top: 686px; font-size: 12.5px; color: rgb(68, 68, 68); width: 32.7px; transform: scaleX(0.960441);">SoCai</div>
<div class="t fit" style="left: 1006.1px; top: 686px; font-size: 12.5px; color: rgb(68, 68, 68); width: 62.9px; transform: scaleX(0.994712);">Nhatky_thu</div>
<div class="t fit" style="left: 1098.6px; top: 686px; font-size: 12.5px; color: rgb(68, 68, 68); width: 33.2px; transform: scaleX(0.956256);">CNTH</div>
<div class="a" style="left:1159.4px;top:686px;width:43px;height:16px;overflow:hidden"><div class="t fit" style="left: 0px; top: 0px; font-size: 12.5px; color: rgb(68, 68, 68); width: 47px; transform: scaleX(0.91373);">So_Chi_t</div></div>
<div class="a" style="left:439px;top:681px;width:45px;height:22px;background:#0000ff"></div>
<div class="t fit" style="left: 448.4px; top: 686px; font-size: 12.5px; color: rgb(255, 255, 255); width: 25.9px; transform: scaleX(0.980828);">NKC</div>
<div class="a" style="left:553px;top:678px;width:65px;height:25px;background:#fff;border-left:1px solid #a8a8a8;border-right:1px solid #a8a8a8"></div>
<div class="a" style="left:553px;top:701px;width:65px;height:2px;background:#217346"></div>
<div class="t fit" style="left: 565px; top: 684.8px; font-size: 13px; font-weight: bold; color: rgb(33, 115, 70); width: 39.9px; transform: scaleX(0.952125);">SoQuy</div>
<div class="a" style="left:1345px;top:679px;width:21px;height:1px;background:#fff"></div>
<div class="a" style="left:1212px;top:694px;width:2.5px;height:2.5px;background:#1b5e36"></div>
<div class="a" style="left:1216px;top:694px;width:2.5px;height:2.5px;background:#1b5e36"></div>
<div class="a" style="left:1220px;top:694px;width:2.5px;height:2.5px;background:#1b5e36"></div>
<div class="a" style="left:1236px;top:684px;width:16px;height:16px;border:1.3px solid #777;border-radius:50%"></div>
<div class="a" style="left:1240px;top:691.3px;width:8px;height:1.6px;background:#666"></div>
<div class="a" style="left:1243.2px;top:688px;width:1.6px;height:8px;background:#666"></div>
<div class="a" style="left:1272px;top:687px;width:2px;height:2px;background:#aaa"></div>
<div class="a" style="left:1272px;top:691px;width:2px;height:2px;background:#aaa"></div>
<div class="a" style="left:1272px;top:695px;width:2px;height:2px;background:#aaa"></div>
<div class="a" style="left:1289px;top:685px;width:54px;height:15px;background:#e8e8e8"></div>
<div class="a" style="left:1289px;top:685px;width:15px;height:15px;border:1px solid #ababab;background:#fff"></div>
<div class="a" style="left:1294px;top:689px;width:0;height:0;border-top:3.5px solid transparent;border-bottom:3.5px solid transparent;border-right:4px solid #777"></div>
<div class="a" style="left:1304px;top:685px;width:19px;height:15px;border:1px solid #ababab;background:#fff"></div>
<div class="a" style="left:1328px;top:685px;width:15px;height:15px;border:1px solid #ababab;background:#fff"></div>
<div class="a" style="left:1334px;top:689px;width:0;height:0;border-top:3.5px solid transparent;border-bottom:3.5px solid transparent;border-left:4px solid #777"></div>

<!-- ===== STATUS BAR ===== -->
<div class="a" style="left:0;top:706px;width:1366px;height:22px;background:#217346"></div>
<div class="t fit" style="left: 8px; top: 712px; font-size: 12px; color: rgb(255, 255, 255); width: 32px; transform: scaleX(0.773998);">READY</div>
<svg style="left:60px;top:710px" width="14" height="14" viewBox="0 0 14 14">
<path d="M1.5 6.5V12.8H12.8V1.5H6.5" fill="none" stroke="#fff" stroke-width="1"></path>
<rect x="7" y="1" width="6" height="2" fill="#fff"></rect>
<g fill="#fff"><rect x="2.9" y="6" width="2" height="1"></rect><rect x="6.2" y="6" width="2" height="1"></rect><rect x="9.1" y="6" width="2" height="1"></rect><rect x="2.9" y="9.9" width="2" height="1"></rect><rect x="6.2" y="9.9" width="2" height="1"></rect><rect x="9.1" y="9.9" width="2" height="1"></rect></g>
<circle cx="3" cy="2.8" r="2.9" fill="#e6efe9"></circle>
</svg>
<div class="a" style="left:1071px;top:706px;width:38px;height:22px;background:#1a5c37"></div>
<svg style="left:1083px;top:710px" width="13" height="13" viewBox="0 0 13 13"><path d="M0.5 0.5h12v12h-12zM4.5 0.5v12M8.5 0.5v12M0.5 4.5h12M0.5 8.5h12" fill="none" stroke="#fff" stroke-width="1"></path></svg>
<svg style="left:1121px;top:710px" width="14" height="13" viewBox="0 0 14 13"><path d="M0.5 0.5h13v12h-13zM3 3h8v7h-8z" fill="none" stroke="#fff" stroke-width="1"></path><path d="M5 5h4M5 6.8h4M5 8.6h4" stroke="#fff" stroke-width="0.9"></path></svg>
<svg style="left:1159px;top:710px" width="14" height="13" viewBox="0 0 14 13"><path d="M0.5 0.5h13v12h-13z" fill="none" stroke="#fff" stroke-width="1"></path><path d="M1 1h3v7h-3z" fill="#e6efe9"></path><path d="M5 1h2.5v6h-2.5z" fill="#fff"></path><path d="M8.5 1v7" stroke="#fff" stroke-width="0.8"></path></svg>
<div class="a" style="left:1190px;top:716px;width:6px;height:2px;background:#fff"></div>
<div class="a" style="left:1200px;top:716.5px;width:100px;height:1px;background:#fff"></div>
<div class="a" style="left:1247px;top:711px;width:3px;height:11px;background:#fff"></div>
<div class="a" style="left:1303px;top:716px;width:8px;height:2px;background:#fff"></div>
<div class="a" style="left:1306px;top:713px;width:2px;height:8px;background:#fff"></div>
<div class="t fit" style="left: 1327px; top: 711px; font-size: 12.5px; color: rgb(255, 255, 255); width: 24px; transform: scaleX(0.842105);">97 %</div>


<!-- ===== TASKBAR ===== -->
<div class="a" style="left:0;top:728px;width:1366px;height:40px;background:linear-gradient(90deg,#ab8359 0px,#a67d56 50px,#946c48 110px,#6a5238 135px,#584834 160px,#6c6a4c 190px,#7c7c5e 240px,#70704f 300px,#606046 340px,#6a6850 380px,#5a4a3a 425px,#5a4434 470px,#8a6446 515px,#a07656 575px,#9c7a66 640px,#a48c80 760px,#a28a7c 900px,#9c8474 958px,#56443a 978px,#52423a 1366px)"></div>
<div class="a" style="left:52px;top:729px;width:58px;height:38px;background:rgba(230,210,180,0.35);border:1px solid rgba(255,245,230,0.55)"></div>
<div class="a" style="left:176px;top:729px;width:58px;height:38px;background:rgba(255,255,255,0.15);border:1px solid rgba(255,255,255,0.35)"></div>
<div class="a" style="left:238px;top:729px;width:58px;height:38px;background:rgba(255,255,255,0.15);border:1px solid rgba(255,255,255,0.35)"></div>
<div class="a" style="left:362px;top:729px;width:58px;height:38px;background:rgba(235,230,215,0.42);border:1px solid rgba(255,255,255,0.75)"></div>
<!-- windows logo -->
<svg style="left:12px;top:735px" width="27" height="25" viewBox="0 0 27 25">
<path d="M0 3.5L11.5 2V12H0Z M12.8 1.8L26.5 0V12H12.8Z M0 13.2H11.5V23L0 21.5Z M12.8 13.2H26.5V25L12.8 23.2Z" fill="#fff"></path>
</svg>
<!-- explorer -->
<svg style="left:65px;top:734px" width="32" height="31" viewBox="0 0 32 31">
<path d="M1 2.5h14l1 2h-15z" fill="#f0d27a"></path>
<rect x="3" y="2" width="10" height="2.5" fill="#fff"></rect><rect x="3.5" y="2.2" width="3" height="2" fill="#1fb030"></rect>
<path d="M10 5h16l1 2.5h-17z" fill="#f0d27a"></path>
<rect x="12" y="4.8" width="12" height="2.5" fill="#fff"></rect><rect x="12" y="5" width="3" height="2" fill="#d8282a"></rect>
<path d="M18 7.5h13v2.5h-13z" fill="#f0d27a"></path>
<rect x="19.5" y="7.6" width="9" height="2.2" fill="#fff"></rect><rect x="19.5" y="7.8" width="3" height="2" fill="#2a8ee0"></rect>
<rect x="0.5" y="9.5" width="30" height="18" fill="#f7de86" stroke="#e2c060" stroke-width="1"></rect>
<rect x="2" y="11" width="27" height="4" fill="#fbeaa8"></rect>
<path d="M4 17.5h23v12.5h-5.5v-6.5h-12v6.5h-5.5z" fill="#62c0ee" stroke="#2d86c8" stroke-width="1"></path>
<path d="M6 18.5v10M5.5 19.5h20" stroke="#bfe6fa" stroke-width="0.8"></path>
</svg>
<!-- unikey -->
<svg style="left:127px;top:736px" width="32" height="25" viewBox="0 0 32 25">
<defs><linearGradient id="kg" x1="0" y1="0" x2="0" y2="1"><stop offset="0" stop-color="#fff"></stop><stop offset="1" stop-color="#d8d8d8"></stop></linearGradient></defs>
<rect x="0" y="0.5" width="14.5" height="12" rx="1.5" fill="url(#kg)" stroke="#c8c8c8" stroke-width="0.8"></rect>
<rect x="16" y="0.5" width="14.5" height="12" rx="1.5" fill="url(#kg)" stroke="#c8c8c8" stroke-width="0.8"></rect>
<rect x="8" y="12" width="14.5" height="12" rx="1.5" fill="url(#kg)" stroke="#c8c8c8" stroke-width="0.8"></rect>
<text x="8" y="9.5" font-size="10" font-weight="bold" text-anchor="middle" fill="#e8141c" font-family="Liberation Sans">u</text>
<text x="24" y="10" font-size="10" font-weight="bold" text-anchor="middle" fill="#e8141c" font-family="Liberation Sans">i</text>
<text x="16" y="21" font-size="10" font-weight="bold" text-anchor="middle" fill="#e8141c" font-family="Liberation Sans">n</text>
</svg>
<!-- zalo -->
<svg style="left:190px;top:733px" width="31" height="30" viewBox="0 0 31 30">
<rect x="0" y="0" width="30.3" height="29.8" rx="6" fill="#0d8ee9"></rect>
<path d="M13 0.3 H24 A6 6 0 0 1 30.3 6.3 V22 A9 9 0 0 1 25 24.5 H14 L7.5 26.5 L8.5 22.5 A12 12 0 0 1 4 12.5 A12 12 0 0 1 13 0.3Z" fill="#fff"></path>
<text x="17.5" y="16.2" font-size="9.5" font-weight="bold" text-anchor="middle" fill="#0d8ee9" font-family="Liberation Sans">Zalo</text>
</svg>
<!-- coccoc -->
<svg style="left:251px;top:732px" width="32" height="32" viewBox="0 0 32 32">
<path d="M16 15.8 L16 1 A15 15 0 1 0 31 15.8Z" fill="#fff"></path>
<path d="M16 15.8 L16 1 L29.5 1 L27 6 L31 10 L31 15.8Z" fill="#fff"></path>
<path d="M15.8 15.8 L15.2 2.5 A13.5 13.5 0 1 0 29.5 17.5 L22 18.5 A6.5 6.5 0 1 1 15.8 9.5Z" fill="#5cb04f"></path>
<circle cx="16" cy="15.8" r="4.6" fill="#5cb04f"></circle>
<path d="M19.3 3.2 L18.3 9.5" stroke="#f26b21" stroke-width="2.6" stroke-linecap="round"></path>
<path d="M21 12 L27.5 2.2 L20.5 2.5 L19.5 10.5Z" fill="#5cb04f"></path>
<path d="M22.2 12.6 L28 10.2" stroke="#f26b21" stroke-width="2.6" stroke-linecap="round"></path>
</svg>
<!-- word -->
<svg style="left:314px;top:733px" width="30" height="30" viewBox="0 0 30 30">
<rect x="12" y="4" width="17" height="22" fill="#fff" stroke="#2b579a" stroke-width="1"></rect>
<path d="M15 8h11M15 11h11M15 14h11M15 17h11M15 20h11M15 23h11" stroke="#2b579a" stroke-width="1.2"></path>
<path d="M0 4L17 0V30L0 26Z" fill="#2b579a"></path>
<text x="8.5" y="20" font-size="11" font-weight="bold" text-anchor="middle" fill="#fff" font-family="Liberation Sans">W</text>
</svg>
<!-- excel -->
<svg style="left:376px;top:733px" width="30" height="30" viewBox="0 0 30 30">
<rect x="12" y="4" width="17" height="22" fill="#fff" stroke="#1e7145" stroke-width="1"></rect>
<path d="M15 8h11M15 11h11M15 14h11M15 17h11M15 20h11M15 23h11M20 6v19" stroke="#1e7145" stroke-width="1.2"></path>
<path d="M0 4L17 0V30L0 26Z" fill="#1e7145"></path>
<text x="8.5" y="20" font-size="12" font-weight="bold" text-anchor="middle" fill="#fff" font-family="Liberation Sans">X</text>
</svg>
<!-- skype -->
<svg style="left:438px;top:733px" width="30" height="30" viewBox="0 0 30 30">
<circle cx="8" cy="8" r="7.5" fill="#00a8e8"></circle><circle cx="22" cy="22" r="7.5" fill="#00a8e8"></circle>
<circle cx="15" cy="15" r="12.5" fill="#00a8e8"></circle>
<text x="15" y="22.5" font-size="21" font-weight="bold" text-anchor="middle" fill="#fff" font-family="Liberation Sans">S</text>
</svg>
<!-- control panel -->
<svg style="left:499px;top:733px" width="32" height="30" viewBox="0 0 32 30">
<rect x="0.5" y="1" width="31" height="21" rx="1" fill="#3a8fd8" stroke="#1f6fb8"></rect>
<rect x="2" y="2.5" width="28" height="18" fill="#5aaee8"></rect>
<circle cx="9" cy="9" r="5" fill="none" stroke="#fff" stroke-width="1.5"></circle>
<path d="M9 4a5 5 0 0 1 5 5h-5z" fill="#f59a23"></path>
<rect x="17" y="5" width="10" height="3" fill="#fff"></rect><rect x="17" y="11" width="10" height="3" fill="#fff"></rect>
<rect x="5" y="16" width="2" height="2" fill="#f59a23"></rect><rect x="9" y="16" width="2" height="2" fill="#fff"></rect>
<ellipse cx="16" cy="26" rx="7" ry="3.5" fill="#e8e8e8"></ellipse>
<rect x="14" y="22" width="4" height="3" fill="#ccc"></rect>
</svg>
<!-- paint -->
<svg style="left:561px;top:732px" width="32" height="31" viewBox="0 0 32 31">
<path d="M2 20 C-1 12 7 6 16 7 C24 8 26 13 22 16 C19 18 21 21 18 24 C14 28 5 27 2 20Z" fill="#c8dcee" stroke="#8fb0cc" stroke-width="0.8"></path>
<circle cx="6" cy="18" r="2.3" fill="#e8342c"></circle><circle cx="9" cy="12.5" r="2.3" fill="#5bb94b"></circle><circle cx="15" cy="10.5" r="2.3" fill="#f5b21c"></circle><circle cx="13" cy="17" r="1.8" fill="#fff" stroke="#8fb0cc" stroke-width="0.6"></circle>
<path d="M15 29L26 8" stroke="#e8901c" stroke-width="2.4"></path>
<path d="M24.5 9.5 L28 2 Q31 0 31.5 2.5 L27 10.5Z" fill="#e8c8a0"></path>
</svg>
<!-- sandboxie -->
<svg style="left:624px;top:733px" width="29" height="29" viewBox="0 0 29 29">
<defs><radialGradient id="sg" cx="0.4" cy="0.35" r="0.7"><stop offset="0" stop-color="#fff"></stop><stop offset="0.7" stop-color="#e4e4e4"></stop><stop offset="1" stop-color="#aaa"></stop></radialGradient></defs>
<circle cx="14.5" cy="14.5" r="13.8" fill="#222"></circle>
<circle cx="14.5" cy="14.5" r="12.6" fill="url(#sg)"></circle>
<path d="M8 3 C5 7 8 11 11 14 C13.5 16.5 12 21 11 26 L19 26 C20 21 21.5 16.5 19 13 C16.5 10 15 6 17 2.5Z" fill="#9cc8e4" stroke="#1a1a1a" stroke-width="1.3"></path>
<path d="M10.5 9.5L16.5 8.5M12 17.5L19.5 17M11.5 22L19.5 21.5" stroke="#4a7fa8" stroke-width="0.8"></path>
</svg>
<!-- IE -->
<svg style="left:686px;top:732px" width="31" height="31" viewBox="0 0 31 31">
<path d="M3.5 28 C-1 24 8 10 20 4.5 C26 2 30 2.5 29.5 6.5" fill="none" stroke="#f2b600" stroke-width="2.6"></path>
<circle cx="16.5" cy="17.5" r="12" fill="#2ea8e6"></circle>
<path d="M11 15.4 A5.6 4.6 0 0 1 22.2 15.4 Z" fill="#fff"></path>
<path d="M10.8 20 H28.5 V23.2 H21.5 A6 4.2 0 0 1 10.8 20Z" fill="#fff"></path>
<path d="M6 22 C10 14 17 7 24 4" fill="none" stroke="#f7cb2e" stroke-width="2.6"></path>
</svg>
<!-- tray -->
<div class="a" style="left:1126.5px;top:746.5px;width:0;height:0;border-left:4.5px solid transparent;border-right:4.5px solid transparent;border-bottom:5px solid #fff"></div>
<svg style="left:1147px;top:742px" width="17" height="15" viewBox="0 0 17 15">
<path d="M1.5 0v15" stroke="#fff" stroke-width="1.5"></path>
<path d="M2 1h5l1 1.5h5v6h-5l-1-1.5h-5z" fill="#fff" stroke="#333" stroke-width="0.6"></path>
<circle cx="11.5" cy="10.5" r="4.3" fill="#e22"></circle>
<path d="M9.5 8.5l4 4M13.5 8.5l-4 4" stroke="#fff" stroke-width="1.3"></path>
</svg>
<svg style="left:1171px;top:742px" width="16" height="14" viewBox="0 0 16 14">
<path d="M1 11h2v3h-2zM4 9h2v5h-2zM7 6.5h2v7.5h-2zM10 4h2v10h-2zM13 1h2v13h-2z" fill="#fff"></path>
</svg>
<svg style="left:1196px;top:741px" width="16" height="15" viewBox="0 0 16 15">
<path d="M1 0v3M4 0v3" stroke="#fff" stroke-width="1.3"></path><rect x="0" y="3" width="5" height="5" fill="#fff"></rect><path d="M2.5 8v7" stroke="#fff" stroke-width="1.5"></path>
<rect x="7.5" y="1.5" width="7.5" height="13" fill="none" stroke="#fff" stroke-width="1.3"></rect><rect x="10" y="0" width="3" height="1.5" fill="#fff"></rect><rect x="9.5" y="4" width="3.5" height="9" fill="#fff"></rect>
</svg>
<svg style="left:1219px;top:741px" width="15" height="15" viewBox="0 0 15 15">
<path d="M0.5 4.5h3l4-4v14l-4-4h-3z" fill="#fff"></path>
<path d="M9.5 5a3 3 0 0 1 0 5M11.5 3a6 6 0 0 1 0 9" fill="none" stroke="#fff" stroke-width="1.2"></path>
</svg>
<div class="t fit" style="left: 1249.3px; top: 742.8px; font-size: 12px; color: rgb(255, 255, 255); width: 22.7px; transform: scaleX(0.872553);">ENG</div>
<div class="t fit" style="left: 1297.6px; top: 735px; font-size: 12px; color: rgb(255, 255, 255); width: 40.9px; transform: scaleX(0.928886);">2:49 CH</div>
<div class="t fit" style="left: 1289.2px; top: 751.5px; font-size: 12px; color: rgb(255, 255, 255); width: 57.7px; transform: scaleX(0.960666);">10/12/2016</div>

</body></html>
